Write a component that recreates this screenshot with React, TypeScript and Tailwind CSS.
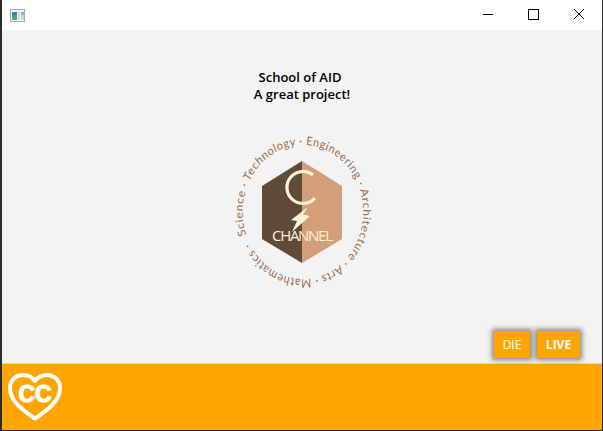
function AppIcon() {
  return (
    <svg width="16" height="14" viewBox="0 0 16 14">
      <rect x="0.5" y="0.5" width="14" height="12" fill="#f4f4f4" stroke="#a9a9ad" />
      <rect x="2" y="3" width="5" height="8" fill="#4f9d94" />
      <rect x="2" y="3" width="5" height="3" fill="#3f7fa8" />
      <rect x="8" y="3" width="2" height="8" fill="#d5dcd8" />
      <rect x="11" y="3" width="3" height="3" fill="#7fb7d6" />
      <rect x="11" y="6" width="3" height="5" fill="#c9d8c4" />
    </svg>
  );
}

function WindowControls() {
  return (
    <svg width="120" height="30" viewBox="0 0 120 30" fill="none" stroke="#000">
      <path d="M 1 14.5 H 11" />
      <rect x="46.5" y="9.5" width="10" height="10" />
      <path d="M 92 9 L 102 19 M 102 9 L 92 19" />
    </svg>
  );
}

function ChannelLogo() {
  return (
    <svg width="150" height="160" viewBox="0 0 150 160">
      <defs>
        <path id="ring" d="M 8 81 a 67 67 0 1 1 134 0 a 67 67 0 1 1 -134 0" />
      </defs>
      <polygon points="74,30 34,55 34,108 74,132" fill="#604a39" />
      <polygon points="74,30 114,55 114,108 74,132" fill="#d29f78" />
      <path d="M 85 44 A 16 16 0 1 0 87 67" fill="none" stroke="#fff3d6" strokeWidth="3.2" />
      <polygon points="80,76 63,89 69,90 64,101 82,85 75,83.5" fill="#fff3d6" />
      <text x="74.5" y="110" textAnchor="middle" fill="#fff3d6" fontSize="15" textLength="61" style={{ fontFamily: '"Open Sans", sans-serif' }}>CHANNEL</text>
      <g transform="translate(75 81) scale(0.9 1) rotate(-20) translate(-75 -81)">
        <text fill="#9c6c4e" fontSize="12" letterSpacing="0.6" style={{ fontFamily: 'Lato, sans-serif' }}>
          <textPath href="#ring">Science · Technology · Engineering · Architecture · Arts · Mathematics ·</textPath>
        </text>
      </g>
    </svg>
  );
}

function HeartLogo() {
  return (
    <svg width="56" height="50" viewBox="0 0 56 50">
      <path d="M28 46.5 C 20 41 3 31 3 16 C 3 8 9 3 16 3 C 21 3 25.5 5.5 28 9 C 30.5 5.5 35 3 40 3 C 47 3 53 8 53 16 C 53 31 36 41 28 46.5 Z" fill="none" stroke="#fff" strokeWidth="4" strokeLinejoin="round" />
      <text x="28" y="30" textAnchor="middle" fill="#fff" fontSize="23" fontWeight="700" stroke="#fff" strokeWidth="1.2" style={{ fontFamily: '"Liberation Sans", sans-serif' }}>CC</text>
    </svg>
  );
}

export default function App() {
  return (
    <div className="w-[603px] h-[431px] flex flex-col bg-white border-l-2 border-r border-b border-[#2b2b2b]" style={{ fontFamily: '"Open Sans", sans-serif' }}>
      <div className="h-[30px] flex items-center justify-between bg-white">
        <div className="pl-2 pt-px"><AppIcon /></div>
        <WindowControls />
      </div>

      <div className="flex-1 flex flex-col items-center bg-[#f3f3f3] relative">
        <div className="mt-[39px] text-[13px] leading-[17px] font-semibold text-black text-center">
          <p className="mr-[4px]">School of AID</p>
          <p>A great project!</p>
        </div>
        <div className="mt-[28px] ml-[2px]"><ChannelLogo /></div>
        <div className="absolute right-[22px] bottom-[5px] flex gap-[7px]">
          <button className="w-[36px] h-[27px] bg-[#ffa500] text-white text-[12px] shadow-[0_0_5px_2px_rgba(70,70,70,0.65)]">DIE</button>
          <button className="w-[43px] h-[27px] bg-[#ffa500] text-white text-[12px] font-bold shadow-[0_0_5px_2px_rgba(70,70,70,0.65)]">LIVE</button>
        </div>
      </div>

      <div className="h-[67px] bg-[#ffa500] border-t border-[#d9d9d9] flex items-start pl-[5px] pt-[8px]">
        <HeartLogo />
      </div>
    </div>
  );
}
